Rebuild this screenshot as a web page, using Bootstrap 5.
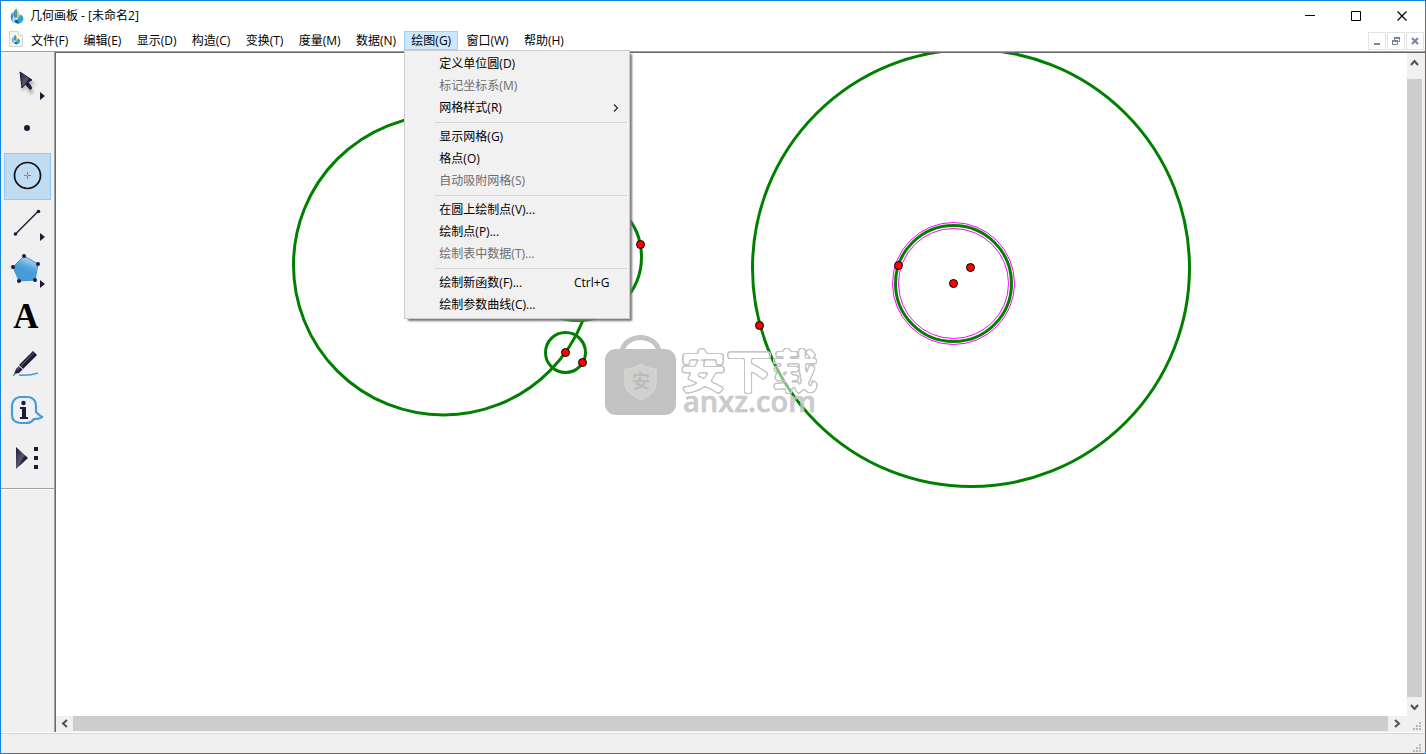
<!DOCTYPE html>
<html lang="zh-CN">
<head>
<meta charset="utf-8">
<meta name="viewport" content="width=device-width, initial-scale=1">
<title>几何画板 - [未命名2]</title>
<link rel="stylesheet" href="https://cdn.jsdelivr.net/npm/bootstrap@5.3.0/dist/css/bootstrap.min.css">
<style>
  body { font-family: "Open Sans", "Noto Sans CJK SC", sans-serif; font-size: 12px; line-height: 20px; color: #000; background: #fff; }
  button { border: 0; padding: 0; background: transparent; color: inherit; }
  svg { display: block; }
  .app-window { border: 1px solid #1883d7; }
  .title-bar { height: 30px; padding-left: 8px; }
  .title-text { padding-left: 5px; }
  .caption-btn { width: 46px; height: 29px; }
  .menu-bar { height: 20px; padding-left: 8px; z-index: 5; }
  .menu-group { width: 548px; padding-left: 1px; }
  .menu-btn { display: block; height: 19px; line-height: 19px; padding: 0 7px; white-space: nowrap; }
  .menu-btn.active { background: #cce8ff; box-shadow: inset 0 0 0 1px #99d1ff; }
  .doc-btns { gap: 1px; padding: 1px 1px 0 0; }
  .doc-btn { width: 18px; height: 18px; border: 1px solid #e3e3e3; }
  .draw-menu { --bs-dropdown-font-size: 12px; --bs-dropdown-min-width: 226px; top: 100%; left: 0; padding: 2px; border: 1px solid #ccc; border-radius: 0; background: #f1f1f1; box-shadow: 3px 3px 2px -1px #777; }
  .draw-menu .dropdown-item { height: 22px; line-height: 22px; padding: 0 18px 0 32px; color: #000; }
  .draw-menu .dropdown-item:disabled { color: #6d6d6d; }
  .draw-menu .dropdown-item.has-sub { padding-right: 7px; }
  .draw-menu .dropdown-divider { margin: 3px 0 3px 28px; border-top: 1px solid #d5d5d5; opacity: 1; }
  .work-area { border-top: 1px solid #a0a0a0; background: #f0f0f0; }
  .tool-box { width: 54px; padding: 7px 3px 0; border-right: 1px solid #a0a0a0; border-bottom: 1px solid #a0a0a0; }
  .tool-btn { width: 47px; height: 47px; }
  .tool-btn.active { background: #c0dcf3; box-shadow: inset 0 0 0 1px #90c8f6; }
  .tool-rule { height: 2px; margin: 6px -3px 0; border-top: 1px solid #a0a0a0; background: #fff; }
  .doc-frame { border-top: 1px solid #696969; border-left: 1px solid #696969; margin-bottom: 1px; }
  .scroll-col { width: 18px; padding-right: 3px; }
  .scroll-row { height: 16px; padding-bottom: 1px; }
  .scroll-thumb { background: #cdcdcd; }
  .end-v { height: 26px; padding-bottom: 8px; }
  .end-v.down { height: 19px; padding: 1px 0 0; }
  .end-h { width: 17px; }
  .end-h.right { width: 19px; }
  .scroll-corner { width: 18px; }
  .status-line { height: 20px; border-top: 1px solid #d7d7d7; background: #f0f0f0; box-shadow: 0 -1px #fff; }
  .wm-cn { font: 700 46px "Noto Sans CJK SC", sans-serif; }
  .wm-latin { font: 600 29px "Open Sans", sans-serif; }
  .wm-seal { font: 700 18px "Noto Sans CJK SC", sans-serif; }
</style>
</head>
<body>
<svg width="0" height="0" class="position-absolute" aria-hidden="true">
  <defs>
    <linearGradient id="penta" x1=".7" y1="0" x2=".45" y2=".6"><stop offset="0" stop-color="#c4e3f7"/><stop offset=".7" stop-color="#54a7dc"/><stop offset="1" stop-color="#459dd7"/></linearGradient>
    <linearGradient id="ink" x1="0" y1="0" x2="1" y2="1"><stop offset="0" stop-color="#1f1a3a"/><stop offset=".5" stop-color="#5a5770"/><stop offset=".6" stop-color="#1f1a3a"/><stop offset="1" stop-color="#1f1a3a"/></linearGradient>
    <filter id="soft" x="-40%" y="-40%" width="200%" height="200%"><feGaussianBlur stdDeviation="1.5"/></filter>
    <filter id="outline" x="-5%" y="-10%" width="110%" height="120%" color-interpolation-filters="sRGB">
      <feMorphology in="SourceAlpha" operator="dilate" radius="1" result="inner"/>
      <feGaussianBlur in="SourceAlpha" stdDeviation="1.2" result="b"/>
      <feComponentTransfer in="b" result="outer"><feFuncA type="linear" slope="9" intercept="-.7"/></feComponentTransfer>
      <feComponentTransfer in="b" result="core"><feFuncA type="linear" slope="5" intercept="-2.200"/></feComponentTransfer>
      <feFlood flood-color="#c6c6c6"/><feComposite in2="outer" operator="in" result="o"/>
      <feComposite in="o" in2="core" operator="out" result="ring"/>
      <feFlood flood-color="#fff" flood-opacity=".5"/><feComposite in2="core" operator="in" result="fill"/>
      <feMerge><feMergeNode in="fill"/><feMergeNode in="ring"/></feMerge>
    </filter>
    <symbol id="drop" viewBox="0 0 16 16">
      <path d="M7.500 .5C4.500 3 3.800 5 4.200 7.500 4.500 9.500 6 10.500 7.500 10 9.500 8 8.500 4 7.500 .5z" fill="#3f9ac4"/>
      <path d="M7.500 1C10.500 4 11.500 8 10.500 11L7.500 10C9 7 8.500 4 7.500 1z" fill="#e3c64c"/>
      <path d="M3.500 4C1 7 1 12 4.500 14.500 6 13 4 11 4 9z" fill="#587ea3"/>
      <path d="M4 9C7 9 7 12 6.500 15 3.500 14.500 2 12 4 9z" fill="#9bd7ec"/>
      <path d="M11.500 6.500C15 8 15.500 12 12.500 14.500 10.500 16 8 15.500 6.500 14.500 8 11.500 10 9 11.500 6.500z" fill="#2da3dc"/>
      <path d="M6.500 11.500C8 11.500 9.500 13 10 15.500 8 15.800 6.500 15 5.500 14z" fill="#1a579c"/>
    </symbol>
    <symbol id="grip" viewBox="0 0 9 9"><path d="M7 1h2M4 4h2M7 4h2M1 7h2M4 7h2M7 7h2" stroke="#b8b8b8" stroke-width="2"/></symbol>
  </defs>
</svg>

<div class="app-window d-flex flex-column vh-100 overflow-hidden">
  <header class="title-bar d-flex align-items-center flex-shrink-0">
    <svg width="16" height="16"><use href="#drop"/></svg>
    <span class="title-text flex-grow-1">几何画板 - [未命名2]</span>
    <button class="caption-btn d-flex align-items-center justify-content-center" aria-label="最小化"><svg width="11" height="11"><path d="M0 4.500h10" stroke="#000"/></svg></button>
    <button class="caption-btn d-flex align-items-center justify-content-center" aria-label="最大化"><svg width="11" height="11"><path d="M.5 .5h9v9h-9z" fill="none" stroke="#000"/></svg></button>
    <button class="caption-btn d-flex align-items-center justify-content-center" aria-label="关闭"><svg width="11" height="11"><path d="M.5 .5l9 9M9.500 .5l-9 9" stroke="#000" stroke-width="1.200"/></svg></button>
  </header>

  <nav class="menu-bar d-flex flex-shrink-0 position-relative" aria-label="菜单">
    <svg width="14" height="16" class="flex-shrink-0 mt-0"><path d="M.5 .5h9l4 4v11H.5z" fill="#f3f4f6" stroke="#d4d4d4"/><path d="M9.500 .5v4h4" fill="#fff" stroke="#d4d4d4"/><use href="#drop" x="2" y="3" width="10" height="11"/></svg>
    <div class="menu-group d-flex justify-content-between align-items-start flex-shrink-0">
      <button class="menu-btn">文件(F)</button>
      <button class="menu-btn">编辑(E)</button>
      <button class="menu-btn">显示(D)</button>
      <button class="menu-btn">构造(C)</button>
      <button class="menu-btn">变换(T)</button>
      <button class="menu-btn">度量(M)</button>
      <button class="menu-btn">数据(N)</button>
      <div class="dropdown">
        <button class="menu-btn active" aria-expanded="true">绘图(G)</button>
        <div class="dropdown-menu draw-menu show">
          <button class="dropdown-item">定义单位圆(D)</button>
          <button class="dropdown-item" disabled>标记坐标系(M)</button>
          <button class="dropdown-item has-sub d-flex align-items-center justify-content-between">网格样式(R)<svg width="8" height="8"><path d="M2 .5l3.500 3.500L2 7.500" fill="none" stroke="#222" stroke-width="1.200"/></svg></button>
          <hr class="dropdown-divider">
          <button class="dropdown-item">显示网格(G)</button>
          <button class="dropdown-item">格点(O)</button>
          <button class="dropdown-item" disabled>自动吸附网格(S)</button>
          <hr class="dropdown-divider">
          <button class="dropdown-item">在圆上绘制点(V)...</button>
          <button class="dropdown-item">绘制点(P)...</button>
          <button class="dropdown-item" disabled>绘制表中数据(T)...</button>
          <hr class="dropdown-divider">
          <button class="dropdown-item d-flex justify-content-between"><span>绘制新函数(F)...</span><span>Ctrl+G</span></button>
          <button class="dropdown-item">绘制参数曲线(C)...</button>
        </div>
      </div>
      <button class="menu-btn">窗口(W)</button>
      <button class="menu-btn">帮助(H)</button>
    </div>
    <div class="doc-btns d-flex ms-auto">
      <button class="doc-btn d-flex align-items-center justify-content-center" aria-label="最小化文档"><svg width="8" height="8"><path d="M1 7h6" stroke="#75869a" stroke-width="2"/></svg></button>
      <button class="doc-btn d-flex align-items-center justify-content-center" aria-label="还原文档"><svg width="8" height="8"><path d="M2.500 3V.5h5v4H6M.5 3.500h5v4h-5z" fill="none" stroke="#75869a"/><path d="M2 1h6M0 4h6" stroke="#75869a" stroke-width="2"/></svg></button>
      <button class="doc-btn d-flex align-items-center justify-content-center" aria-label="关闭文档"><svg width="8" height="8"><path d="M1 1l6 6M7 1L1 7" stroke="#75869a" stroke-width="2"/></svg></button>
    </div>
  </nav>

  <main class="work-area d-flex flex-grow-1 overflow-hidden">
    <aside class="tool-box flex-shrink-0" aria-label="工具箱">
      <button class="tool-btn d-block" aria-label="选择箭头"><svg width="47" height="47"><path d="M18 16l14 9-6 1 4 8-4 1-4-7-4 5z" fill="#888" opacity=".6" filter="url(#soft)"/><path d="M16 13L28 21 24 23 28 29 26 30.500 21.500 25 18 29z" fill="url(#ink)" stroke="#1f1a3a"/><path d="M36 33l5 4-5 4z" fill="#1f1a3a"/></svg></button>
      <button class="tool-btn d-block" aria-label="点"><svg width="47" height="47"><circle cx="23" cy="22" r="3" fill="#1f1a3a"/></svg></button>
      <button class="tool-btn active d-block" aria-label="圆"><svg width="47" height="47"><circle cx="23.500" cy="22.500" r="13" fill="none" stroke="#111" stroke-width="1.700"/><path d="M20 22.500h3M24 22.500h3M23.500 19v3M23.500 23v3" stroke="#4490c8"/></svg></button>
      <button class="tool-btn d-block" aria-label="线段"><svg width="47" height="47"><path d="M11.500 34L34.500 11" stroke="#1f1a3a" stroke-width="1.500"/><circle cx="11.500" cy="34" r="1.800" fill="#1f1a3a"/><circle cx="34.500" cy="11.500" r="1.800" fill="#1f1a3a"/><path d="M36 33l5 4-5 4z" fill="#1f1a3a"/></svg></button>
      <button class="tool-btn d-block" aria-label="多边形"><svg width="47" height="47"><path d="M20 9L34 17 31 33 15 34 9 20z" fill="url(#penta)" stroke="#3c92cf"/><g fill="#1f1a3a"><circle cx="20" cy="9" r="2"/><circle cx="34" cy="17" r="2"/><circle cx="31" cy="33" r="2"/><circle cx="15" cy="34" r="2"/><circle cx="9" cy="20" r="2"/></g><path d="M36 33l5 4-5 4z" fill="#1f1a3a"/></svg></button>
      <button class="tool-btn d-block" aria-label="文本"><svg width="47" height="47"><text x="22" y="34" text-anchor="middle" font-family="Liberation Serif, serif" font-weight="700" font-size="35">A</text></svg></button>
      <button class="tool-btn d-block" aria-label="标记"><svg width="47" height="47"><path d="M29 10L33 14 19 28 15 24z" fill="#1f1a3a"/><path d="M15 25L19 28 15 32 10 33 12 28z" fill="#252044"/><path d="M30 11.500L13 29" stroke="#777589"/><path d="M15 24.500l4 4" stroke="#eee"/><path d="M9 35l2-2M15 34C24 35 28 34 34 32" fill="none" stroke="#459dd7" stroke-width="1.500"/></svg></button>
      <button class="tool-btn d-block" aria-label="信息"><svg width="47" height="47"><path d="M16 9h7q8 0 9 8v7q3 3 6 5-2 2-8 2-3 4-7 4h-7q-8-1-8-8V17q1-7 8-8z" fill="#f0f0f0" stroke="#459dd7" stroke-width="2.200"/><circle cx="19.500" cy="15" r="2.200" fill="#1f1a3a"/><path d="M16 19h6v10h2v2h-8v-2h2v-8h-2z" fill="#1f1a3a"/></svg></button>
      <button class="tool-btn d-block" aria-label="自定义工具"><svg width="47" height="47"><path d="M12 12L24 23 12 34z" fill="url(#ink)"/><path d="M30 12h4v4h-4zM30 21h4v4h-4zM30 30h4v4h-4z" fill="#1f1a3a"/></svg></button>
      <div class="tool-rule"></div>
    </aside>

    <section class="doc-frame d-flex flex-column flex-grow-1 overflow-hidden">
      <div class="d-flex flex-grow-1 overflow-hidden">
        <div class="flex-grow-1 bg-white overflow-hidden">
          <svg width="100%" height="100%" role="img" aria-label="几何画布">
            <g transform="translate(-56 -53)">
              <g fill="none" stroke="#008000" stroke-width="3">
                <circle cx="443.500" cy="265" r="150"/>
                <circle cx="578" cy="257" r="63.500"/>
                <circle cx="565.500" cy="352.500" r="20"/>
                <circle cx="971" cy="268" r="218.500"/>
                <circle cx="953.500" cy="283.500" r="58"/>
              </g>
              <g fill="none" stroke="#f0f"><circle cx="953.500" cy="283.500" r="61"/><circle cx="953.500" cy="283.500" r="55"/></g>
              <g fill="#f00" stroke="#000">
                <circle cx="640.500" cy="244.500" r="4"/><circle cx="565.500" cy="352.500" r="4"/><circle cx="582.500" cy="362.500" r="4"/><circle cx="759.500" cy="325.500" r="4"/>
                <circle cx="898.500" cy="265.500" r="4"/><circle cx="953.500" cy="283.500" r="4"/><circle cx="970.500" cy="267.500" r="4"/>
              </g>
              <g>
                <path d="M622 351C626 333 655 333 659 351" fill="none" stroke="#c4c4c4" stroke-width="5"/>
                <rect x="605" y="349" width="71" height="66" rx="11" fill="#c2c2c2"/>
                <path d="M641 364C636 367 630 369 625 369V384C625 391 634 397 641 400 648 397 656 391 656 384V369C651 369 646 367 641 364z" fill="#d0d0ce" stroke="#dadada"/>
                <text class="wm-seal" x="641" y="388" text-anchor="middle" fill="#bbb">安</text>
                <text class="wm-cn" x="680" y="388" filter="url(#outline)">安下载</text>
                <text class="wm-latin" x="683" y="412" fill="#c3c3c3" fill-opacity=".85" stroke="#c3c3c3" stroke-width=".5">anxz.com</text>
              </g>
            </g>
          </svg>
        </div>
        <div class="scroll-col d-flex flex-column flex-shrink-0">
          <button class="end-v d-flex align-items-center justify-content-center" aria-label="向上滚动"><svg width="9" height="7"><path d="M1 6l3.500-4L8 6" fill="none" stroke="#505050" stroke-width="2"/></svg></button>
          <div class="scroll-thumb flex-grow-1"></div>
          <button class="end-v down d-flex align-items-center justify-content-center" aria-label="向下滚动"><svg width="9" height="7"><path d="M1 1l3.500 4L8 1" fill="none" stroke="#505050" stroke-width="2"/></svg></button>
        </div>
      </div>
      <div class="scroll-row d-flex flex-shrink-0">
        <button class="end-h d-flex align-items-center justify-content-center" aria-label="向左滚动"><svg width="7" height="9"><path d="M6 1L2 4.500 6 8" fill="none" stroke="#505050" stroke-width="2"/></svg></button>
        <div class="scroll-thumb flex-grow-1"></div>
        <button class="end-h right d-flex align-items-center justify-content-center" aria-label="向右滚动"><svg width="7" height="9"><path d="M1 1l4 3.500L1 8" fill="none" stroke="#505050" stroke-width="2"/></svg></button>
        <div class="scroll-corner d-flex align-items-end justify-content-center"><svg width="9" height="9"><use href="#grip"/></svg></div>
      </div>
    </section>
  </main>
  <footer class="status-line d-flex flex-shrink-0 align-items-end justify-content-end pe-0"><svg class="me-1 mb-0" width="9" height="9"><use href="#grip"/></svg></footer>
</div>
<script src="https://cdn.jsdelivr.net/npm/bootstrap@5.3.0/dist/js/bootstrap.bundle.min.js"></script>
</body>
</html>
